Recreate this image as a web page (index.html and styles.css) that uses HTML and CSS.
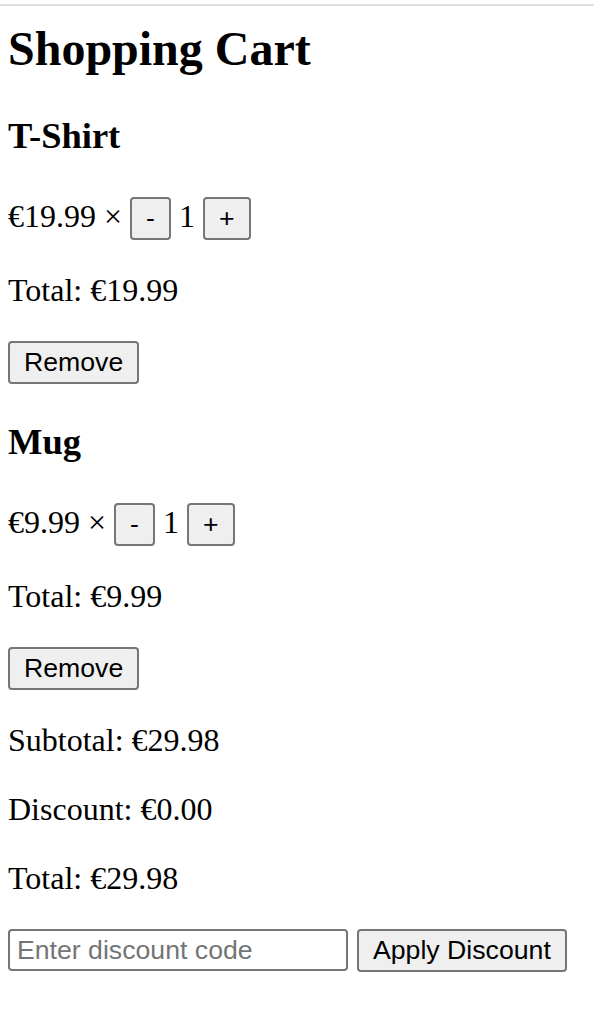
FILE: index.html
```html
<!DOCTYPE html>
<html>
<head>
<meta charset="utf-8">
<title>Shopping Cart</title>
<link rel="stylesheet" href="styles.css">
</head>
<body>
<div class="topbar"></div>
<main class="cart">
  <h1 class="title">Shopping Cart</h1>
  <section class="item">
    <h2 class="item-name">T-Shirt</h2>
    <p class="row">€19.99 × <button class="btn">-</button> 1 <button class="btn">+</button></p>
    <p class="line">Total: €19.99</p>
    <p class="row"><button class="btn">Remove</button></p>
  </section>
  <section class="item">
    <h2 class="item-name">Mug</h2>
    <p class="row">€9.99 × <button class="btn">-</button> 1 <button class="btn">+</button></p>
    <p class="line">Total: €9.99</p>
    <p class="row"><button class="btn">Remove</button></p>
  </section>
  <p class="line">Subtotal: €29.98</p>
  <p class="line">Discount: €0.00</p>
  <p class="line">Total: €29.98</p>
  <div class="discount">
    <input class="code" type="text" placeholder="Enter discount code">
    <button class="btn">Apply Discount</button>
  </div>
</main>
</body>
</html>
```
FILE: styles.css
```css
html, body {
  margin: 0;
  padding: 0;
  background: #fff;
}
body {
  font-family: "Liberation Serif", "Times New Roman", serif;
  font-size: 32px;
  color: #000;
}
.topbar {
  margin-top: 4px;
  height: 2px;
  background: #e0e0e0;
}
.cart {
  padding: 0 8px;
}
.title {
  font-size: 48px;
  font-weight: bold;
  margin: 15px 0 38px;
}
.item-name {
  font-size: 36.5px;
  font-weight: bold;
  margin: 36px 0 40px;
}
.line, .row {
  margin: 32px 0;
}
.btn {
  font-family: "Liberation Sans", Arial, sans-serif;
  font-size: 26.67px;
  color: #000;
  background: #efefef;
  border: 2px solid #767676;
  border-radius: 4px;
  padding: 4px 14px;
  margin: 0;
}
.discount {
  display: flex;
  gap: 9px;
  margin-top: 30px;
}
.code {
  font-family: "Liberation Sans", Arial, sans-serif;
  font-size: 26.67px;
  width: 340px;
  box-sizing: border-box;
  height: 42px;
  padding: 0 7px;
  border: 2px solid #767676;
  border-radius: 4px;
  margin: 0;
}
.code::placeholder {
  color: #757575;
}
```
